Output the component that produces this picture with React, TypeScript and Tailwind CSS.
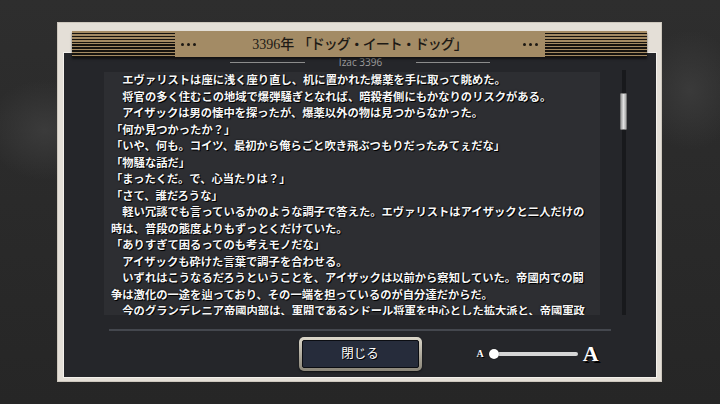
const serif = { fontFamily: '"Liberation Serif", "Noto Sans CJK JP", serif' };

const lines = [
  '　エヴァリストは座に浅く座り直し、机に置かれた爆薬を手に取って眺めた。',
  '　将官の多く住むこの地域で爆弾騒ぎとなれば、暗殺者側にもかなりのリスクがある。',
  '　アイザックは男の懐中を探ったが、爆薬以外の物は見つからなかった。',
  '「何か見つかったか？」',
  '「いや、何も。コイツ、最初から俺らごと吹き飛ぶつもりだったみてぇだな」',
  '「物騒な話だ」',
  '「まったくだ。で、心当たりは？」',
  '「さて、誰だろうな」',
  '　軽い冗談でも言っているかのような調子で答えた。エヴァリストはアイザックと二人だけの',
  '時は、普段の態度よりもずっとくだけていた。',
  '「ありすぎて困るってのも考えモノだな」',
  '　アイザックも砕けた言葉で調子を合わせる。',
  '　いずれはこうなるだろうということを、アイザックは以前から察知していた。帝國内での闘',
  '争は激化の一途を辿っており、その一端を担っているのが自分達だからだ。',
  '　今のグランデレニア帝國内部は、軍閥であるシドール将軍を中心とした拡大派と、帝國軍政',
];

function Dots() {
  return (
    <div className="flex gap-[3px]">
      <div className="w-[3px] h-[3px] rounded-full bg-[#1c1812]" />
      <div className="w-[3px] h-[3px] rounded-full bg-[#1c1812]" />
      <div className="w-[3px] h-[3px] rounded-full bg-[#1c1812]" />
    </div>
  );
}

function Stripes({ w }: { w: string }) {
  return (
    <div
      className={`${w} h-full bg-[repeating-linear-gradient(180deg,#a38a63_0px,#a38a63_1.5px,#16130f_1.5px,#16130f_3px)]`}
    />
  );
}

export default function App() {
  return (
    <div className="w-[720px] h-[404px] overflow-hidden bg-[#292929] pt-[22px] pl-[57px] [background-image:radial-gradient(ellipse_60px_50px_at_45px_130px,#3b3b3b,transparent),radial-gradient(ellipse_50px_60px_at_690px_90px,#3a3a3a,transparent),linear-gradient(180deg,#2e2e2e,#262626)]">
      <div className="w-[605px] h-[360px] bg-[#e4dfd7] border border-[#cdc7bd] flex flex-col pt-[8px] pl-[6px] pr-[5px] pb-[4px]">
        {/* header bar */}
        <div className="relative z-10 ml-[8px] mr-[9px] h-[26px] flex items-center bg-[#a38b65] shadow-[0_2px_2px_rgba(0,0,0,0.55)]">
          <Stripes w="w-[103px]" />
          <div className="ml-[6px]">
            <Dots />
          </div>
          <div className="flex-1 text-center text-[14px] text-[#1d1a15] font-medium" style={serif}>
            3396年 <span className="tracking-[-1px]">「ドッグ・イート・ドッグ」</span>
          </div>
          <div className="mr-[7px]">
            <Dots />
          </div>
          <Stripes w="w-[102px]" />
        </div>

        {/* panel */}
        <div className="-mt-[4px] flex-1 flex flex-col bg-[#25262a] shadow-[0_0_0_1px_#f4f1ec]">
          <div className="mt-[3px] h-[12px] flex items-center justify-center">
            <div className="w-[75px] h-px bg-[#8c8c8c]" />
            <div
              className="mx-[34px] text-[10px] leading-none text-[#9d9d9d]"
              style={{ fontFamily: '"Open Sans", sans-serif' }}
            >
              Izac 3396
            </div>
            <div className="w-[74px] h-px bg-[#8c8c8c]" />
          </div>

          <div className="mt-[4px] flex pl-[40px]">
            <div
              className="w-[496px] h-[243px] overflow-hidden pl-[7px] bg-[#2d2e32] text-[11.3px] leading-[16.5px] text-[#f7f7f7] font-bold [text-shadow:1px_1px_0_#000,0_0_2px_#000]"
              style={serif}
            >
              {lines.map((l, i) => (
                <div key={i} className="whitespace-nowrap">
                  {l}
                </div>
              ))}
            </div>
            <div className="ml-[20px] -mt-[2px] w-[7px] h-[245px] relative flex justify-center">
              <div className="w-[4px] h-full bg-[#18191c]" />
              <div className="absolute top-[23px] left-0 w-[7px] h-[37px] rounded-[1px] border border-[#777] bg-[linear-gradient(90deg,#9e9e9e,#e2e2e2_50%,#a8a8a8)]" />
            </div>
          </div>

          <div className="mt-[14px] ml-[45px] w-[502px] h-[2px] bg-[#44474e]" />

          <div className="mt-[6px] grid grid-cols-[1fr_auto_1fr] items-center">
            <div />
            <div className="w-[123px] h-[34px] rounded-[5px] p-[3px] bg-[linear-gradient(180deg,#dcd7ca,#a9a497_60%,#8a8578)] shadow-[0_1px_2px_rgba(0,0,0,0.6)]">
              <div
                className="h-full rounded-[2px] border border-[#0b0d12] bg-[#262c3b] flex items-center justify-center text-[12.5px] text-white [text-shadow:1px_1px_0_#000]"
                style={serif}
              >
                閉じる
              </div>
            </div>
            <div className="pl-[55px] flex items-center" style={serif}>
              <span className="text-[10px] font-bold text-white leading-none [text-shadow:1px_1px_0_#000]">A</span>
              <div className="ml-[5px] w-[89px] h-[12px] relative flex items-center">
                <div className="ml-[5px] flex-1 h-[4px] rounded-full bg-[#d6d6d6]" />
                <div className="absolute left-0 top-[1px] w-[10px] h-[10px] rounded-full bg-white shadow-[0_0_1px_#000]" />
              </div>
              <span className="ml-[5px] text-[22px] font-bold text-white leading-none [text-shadow:2px_2px_0_#000]">A</span>
            </div>
          </div>
        </div>
      </div>
    </div>
  );
}
